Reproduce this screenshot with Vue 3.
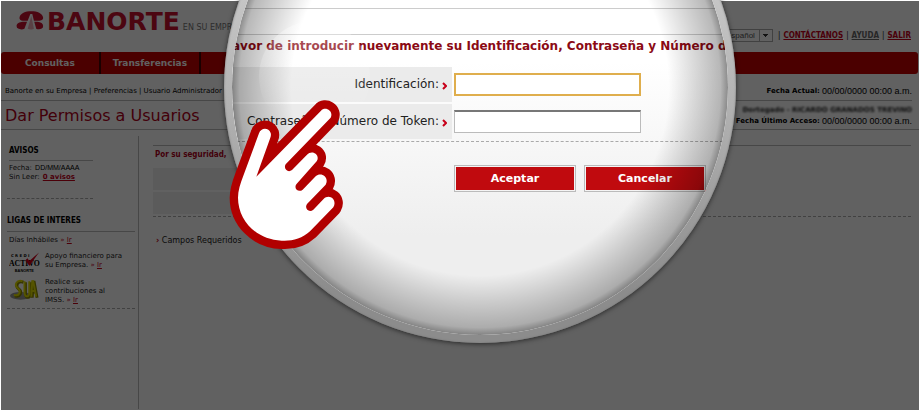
<script setup>
import { ref } from 'vue'

const menu = ['Consultas', 'Transferencias']
const language = ref('Español')
const user = ref('')
const token = ref('')
</script>

<template>
  <div class="page">
    <!-- top bar -->
    <header class="top">
      <div class="brand">
        <svg class="mark" viewBox="0 0 84 58" aria-hidden="true">
          <path d="M10 20C12 7 28 1 46 1s34 6 36 19c1 7-6 10-14 10H54L49 9h-6l-8 21H20C13 30 9 26 10 20z" />
          <path d="M33 33 25 54C16 59 1 55 1 46c0-8 9-12 19-13z" />
          <path d="M55 33h10c10 1 17 5 17 13 0 9-13 12-21 8z" />
          <path d="M46 15l8 39c-4 3-14 3-19 0z" opacity="0.35" />
        </svg>
        <span class="name">BANORTE</span>
        <span class="tag">EN SU EMPRESA</span>
      </div>
      <nav class="tools" aria-label="Herramientas">
        <select v-model="language" aria-label="Idioma">
          <option>Español</option>
        </select>
        <span>|</span>
        <a href="#contacto">CONTÁCTANOS</a>
        <span>|</span>
        <a href="#ayuda" class="grey">AYUDA</a>
        <span>|</span>
        <a href="#salir">SALIR</a>
      </nav>
    </header>

    <nav class="menu" aria-label="Principal">
      <a v-for="item in menu" :key="item" href="#">{{ item }}</a>
    </nav>

    <div class="crumbs">
      <span>Banorte en su Empresa | Preferencias | Usuario Administrador</span>
      <span class="when"><b>Fecha Actual:</b> <span class="date">00/00/0000 00:00 a.m.</span></span>
    </div>

    <div class="title">
      <h1>Dar Permisos a Usuarios</h1>
      <div class="session">
        <span class="hidden-user">Dortegado - RICARDO GRANADOS TREVINO</span>
        <span class="when"><b>Fecha Último Acceso:</b> <span class="date">00/00/0000 00:00 a.m.</span></span>
      </div>
    </div>

    <div class="body">
      <aside>
        <section class="notices">
          <h2>AVISOS</h2>
          <p>Fecha: <span class="day">DD/MM/AAAA</span></p>
          <p>Sin Leer: <a href="#avisos"><b>0 avisos</b></a></p>
        </section>
        <section class="links">
          <h2>LIGAS DE INTERES</h2>
          <p class="first">Días Inhábiles <i>»</i> <a href="#dias">Ir</a></p>
          <div class="item">
            <svg viewBox="0 0 32 24" aria-hidden="true">
              <text x="2" y="5" class="credi">C R E D I</text>
              <text x="0" y="14" class="activo">ACTIVO</text>
              <text x="6" y="20" class="sub">BANORTE</text>
              <path d="M17 8l4 6L31 0 21 9l-2-3z" fill="#d0021b" />
            </svg>
            <p>Apoyo financiero para<br />su Empresa. <i>»</i> <a href="#apoyo">Ir</a></p>
          </div>
          <div class="item">
            <svg viewBox="0 0 32 24" aria-hidden="true">
              <ellipse cx="12" cy="18" rx="11" ry="4" fill="#9a9a9a" />
              <g fill="none" stroke="#8d8a00" stroke-width="3">
                <path d="M15 4c-6-2-9 4-5 7s2 9-4 7M17 4v11c0 6 5 6 5 0V4M24 20l1-16h1l3 16M24 14h4" />
              </g>
              <g fill="none" stroke="#e0dc00" stroke-width="2">
                <path d="M14 3c-6-2-9 4-5 7s2 9-4 7M16 3v11c0 6 5 6 5 0V3M23 19l1-16h1l3 16M23 13h4" />
              </g>
            </svg>
            <p>Realice sus<br />contribuciones al<br />IMSS. <i>»</i> <a href="#imss">Ir</a></p>
          </div>
        </section>
      </aside>
      <main>
        <p class="safe">Por su seguridad,</p>
        <div class="field"></div>
        <div class="field"></div>
        <p class="required"><b>›</b> Campos Requeridos</p>
      </main>
    </div>

    <div class="dim"></div>

    <!-- magnifier -->
    <div class="lens">
      <form class="glass" @submit.prevent>
        <div class="strip"></div>
        <p class="message">avor de introducir nuevamente su Identificación, Contraseña y Número d</p>
        <div class="row">
          <label for="user">Identificación:</label>
          <svg class="chevron" viewBox="0 0 5 8" aria-hidden="true"><path d="M1 1l3 3-3 3" /></svg>
          <input id="user" v-model="user" type="text" class="focus" />
        </div>
        <div class="row">
          <label for="token">Contraseña y Número de Token:</label>
          <svg class="chevron" viewBox="0 0 5 8" aria-hidden="true"><path d="M1 1l3 3-3 3" /></svg>
          <input id="token" v-model="token" type="password" />
        </div>
        <div class="actions">
          <button type="submit">Aceptar</button>
          <button type="button">Cancelar</button>
        </div>
        <div class="shade"></div>
        <div class="shine"></div>
      </form>
    </div>

    <svg class="hand" viewBox="27 24 348 456" aria-hidden="true">
      <path
        d="M117 130C123 112 146 112 152 129Q154 135 151 143L109 260 303 62C315 47 342 62 332 83L197 223C189 236 204 250 216 240L261 194C277 177 302 195 290 214L229 283C220 296 236 309 248 299L287 259C303 244 329 262 317 284L261 342C252 355 267 370 280 359L310 328C328 309 353 330 340 352L270 424C246 446 215 454 185 452C110 450 54 391 54 323C54 302 61 280 70 257Z"
        fill="#fff"
        stroke="#b10000"
        stroke-width="50"
        stroke-linejoin="round"
        paint-order="stroke"
      />
    </svg>
  </div>
</template>

<style>
body {
  margin: 0;
  background: #fff;
}
</style>

<style scoped>
.page {
  position: relative;
  box-sizing: border-box;
  min-height: 100vh;
  overflow: hidden;
  padding: 1px 1px 0;
  background: #fff;
  color: #222;
  font-family: "DejaVu Sans", Verdana, sans-serif;
  font-size: 7px;
  line-height: 9px;
}
h1, h2, p {
  margin: 0;
}
a, i {
  color: #c4001a;
  font-style: normal;
}

/* header */
.top {
  display: flex;
  justify-content: space-between;
  height: 51px;
}
.brand {
  display: flex;
  align-items: flex-start;
  padding: 10px 0 0 15px;
}
.mark {
  width: 28px;
  height: 19px;
  fill: #c8102e;
}
.name {
  margin: -3px 0 0 3px;
  color: #c8102e;
  font: bold 25px/28px "DejaVu Sans", Verdana, sans-serif;
}
.tag {
  margin: 12px 0 0 3px;
  color: #777;
  font-size: 8px;
  white-space: nowrap;
}
.tools {
  display: flex;
  align-items: center;
  gap: 3px;
  height: 14px;
  padding: 27px 8px 0 0;
  font-family: "DejaVu Sans Condensed", "DejaVu Sans", sans-serif;
  font-size: 8px;
}
.tools a {
  font-weight: bold;
}
.tools .grey {
  color: #666;
}
.tools select {
  width: 54px;
  height: 13px;
  margin-right: 2px;
  padding: 0 0 0 6px;
  border: 1px solid #aaa;
  border-radius: 0;
  appearance: none;
  background:
    linear-gradient(#333, #333) right 4px top 4px / 5px 1px no-repeat,
    linear-gradient(#333, #333) right 5px top 5px / 3px 1px no-repeat,
    linear-gradient(#333, #333) right 6px top 6px / 1px 1px no-repeat,
    linear-gradient(#aaa, #aaa) right 12px top 0 / 1px 100% no-repeat,
    #fff;
  color: #555;
  font: 8px "Liberation Sans", Arial, sans-serif;
}

/* menu */
.menu {
  display: flex;
  height: 22px;
  margin-right: 1px;
  border-radius: 3px;
  background: #c40000;
}
.menu a {
  padding: 0 12px;
  border-right: 2px solid #400;
  color: #fff;
  font: bold 9px/22px "DejaVu Sans", Verdana, sans-serif;
  text-decoration: none;
}
.menu a:first-child {
  padding: 0 24px;
}

.crumbs {
  display: flex;
  justify-content: space-between;
  align-items: center;
  height: 27px;
  margin-right: 7px;
  padding: 8px 0 0 4px;
  box-sizing: border-box;
  border-bottom: 1px solid #bbb;
  color: #000;
}
.when {
  display: flex;
  gap: 2px;
  color: #000;
}
.date {
  font: 9px/9px "Liberation Sans", Arial, sans-serif;
}
.title {
  display: flex;
  justify-content: space-between;
  height: 28px;
  padding: 0 7px 0 4px;
  border-bottom: 1px solid #bbb;
}
.title h1 {
  color: #b0001a;
  font: 16px/30px "DejaVu Sans", Verdana, sans-serif;
}
.session {
  display: flex;
  flex-direction: column;
  align-items: flex-end;
  gap: 2px;
  padding-top: 5px;
}
.hidden-user {
  filter: blur(1px);
  font-weight: bold;
}

/* body */
.body {
  display: flex;
  min-height: 279px;
}
aside {
  box-sizing: border-box;
  width: 138px;
  margin-top: 6px;
  padding: 9px 3px 0 6px;
  border-right: 1px solid #bbb;
}
h2 {
  color: #000;
  font-family: "DejaVu Sans Condensed", "DejaVu Sans", sans-serif;
  font-size: 8px;
  line-height: 12px;
}
.notices {
  width: 84px;
  height: 53px;
  padding-left: 2px;
  border-bottom: 1px dashed #aaa;
}
.notices h2 {
  margin-bottom: 2px;
  padding-bottom: 3px;
  border-bottom: 1px solid #bbb;
}
.day {
  margin-left: 1px;
  color: #000;
  font-family: "Liberation Sans", Arial, sans-serif;
}
.notices a {
  margin-left: 1px;
}
.links {
  padding: 16px 0 3px;
  border-bottom: 1px dashed #aaa;
}
.links h2 {
  padding-bottom: 4px;
  border-bottom: 1px solid #bbb;
}
.links .first {
  padding: 4px 0 7px 2px;
}
.item {
  display: flex;
  gap: 5px;
  margin: 0 0 2px 2px;
}
.item:last-child {
  margin-bottom: 0;
}
.item svg {
  flex: none;
  width: 31px;
  height: 24px;
}
.credi {
  font: bold 4px "DejaVu Sans", sans-serif;
}
.activo {
  font: bold 8px "Liberation Serif", serif;
}
.sub {
  font: bold 4px "Liberation Sans", sans-serif;
}
main {
  flex: 1;
  padding: 15px 8px 0 14px;
}
.safe {
  margin-bottom: 9px;
  padding: 4px 2px 0;
  border-top: 1px solid #bbb;
  color: #b0001a;
  font: bold 8px/9px "DejaVu Sans Condensed", "DejaVu Sans", sans-serif;
}
.field {
  width: 100px;
  height: 22px;
  margin-bottom: 2px;
  background: #efefef;
}
.required {
  padding: 19px 3px 0;
  border-top: 1px dashed #aaa;
  font-size: 8px;
}
.required b {
  color: #c4001a;
}

/* dark veil, the 1px rim stays clear */
.dim {
  position: absolute;
  inset: 1px 1px 0;
  background: rgba(0, 0, 0, 0.62);
  pointer-events: none;
}

/* magnifier */
.lens {
  position: absolute;
  top: -169px;
  left: 224px;
  box-sizing: border-box;
  width: 512px;
  height: 512px;
  padding: 8px;
  border-radius: 50%;
  background: linear-gradient(#c8c8c8 30%, #acacac 60%, #8c8c8c 90%);
  box-shadow: 0 1px 5px rgba(0, 0, 0, 0.6), inset 0 0 2px #777;
}
.glass {
  position: relative;
  height: 496px;
  overflow: hidden;
  border-radius: 50%;
  background: linear-gradient(#fff 45%, #eee 80%);
}
.strip {
  height: 25px;
  margin-top: 169px;
  border: solid #ccc;
  border-width: 1px 0;
}
.message {
  margin-bottom: 9px;
  color: #8b0a14;
  font-size: 12px;
  font-weight: bold;
  line-height: 23px;
  white-space: nowrap;
}
.row {
  display: flex;
  align-items: center;
  height: 35px;
  margin-bottom: 2px;
  background: linear-gradient(#ebebeb, #ebebeb) left / 220px 100% no-repeat;
}
.row label {
  width: 207px;
  color: #222;
  font-size: 12px;
  line-height: 35px;
  text-align: right;
  white-space: nowrap;
}
.chevron {
  width: 5px;
  height: 8px;
  margin: 2px 7px 0 3px;
  fill: none;
  stroke: #c8001a;
  stroke-width: 2;
}
.row input {
  box-sizing: border-box;
  width: 187px;
  height: 23px;
  border: 1px solid #bbb;
  border-top: 2px solid #777;
  background: #fff;
  outline: none;
}
.row .focus {
  border: 2px solid #dfae4d;
}
.actions {
  display: flex;
  gap: 8px;
  padding: 23px 0 0 222px;
  border-top: 1px dashed #aaa;
}
.actions button {
  width: 122px;
  height: 27px;
  padding: 0;
  border: 1px solid #bbb;
  background: #c00a0e;
  box-shadow: inset 0 0 0 1px #f4f4f4;
  color: #fff;
  font: bold 11px "DejaVu Sans", Verdana, sans-serif;
}
.shade {
  position: absolute;
  inset: 0;
  border-radius: 50%;
  background: radial-gradient(circle closest-side, transparent 76%, rgba(0, 0, 0, 0.15) 87%, rgba(0, 0, 0, 0.28) 97%, rgba(0, 0, 0, 0.45));
  pointer-events: none;
}
.shine {
  position: absolute;
  top: 182px;
  left: 27px;
  width: 111px;
  height: 111px;
  border-radius: 50%;
  background: linear-gradient(rgba(255, 255, 255, 0.35), rgba(255, 255, 255, 0) 80%);
  pointer-events: none;
}
.hand {
  position: absolute;
  top: 98px;
  left: 229px;
  width: 116px;
  height: 152px;
}
</style>
